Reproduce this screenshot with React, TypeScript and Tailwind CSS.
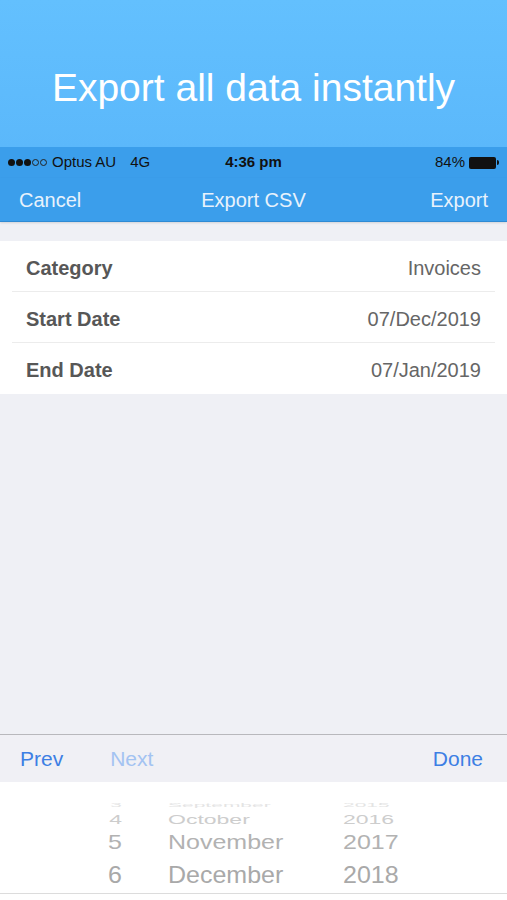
import React from "react";

const font = { fontFamily: '"Liberation Sans", Arial, sans-serif' };

type Row = { label: string; value: string };

const rows: Row[] = [
  { label: "Category", value: "Invoices" },
  { label: "Start Date", value: "07/Dec/2019" },
  { label: "End Date", value: "07/Jan/2019" },
];

function SignalDots() {
  return (
    <div className="flex items-center gap-[1px]">
      {[0, 1, 2].map((i) => (
        <span key={i} className="inline-block h-[7px] w-[7px] rounded-full bg-[#111]" />
      ))}
      {[0, 1].map((i) => (
        <span key={i} className="inline-block h-[7px] w-[7px] rounded-full border border-[#222]" />
      ))}
    </div>
  );
}

function Battery() {
  return (
    <div className="flex items-center">
      <div className="h-[12px] w-[27px] rounded-[2px] bg-[#111]" />
      <div className="ml-[1px] h-[5px] w-[2px] rounded-r-sm bg-[#111]" />
    </div>
  );
}

export default function App() {
  return (
    <div className="flex h-[900px] w-[507px] flex-col overflow-hidden bg-[#eff0f5]" style={font}>
      {/* promo header */}
      <div className="h-[147px] bg-gradient-to-b from-[#63c0fe] to-[#5bb8fb] pt-[65px] text-center">
        <h1 className="text-[39px] leading-[46px] text-white">Export all data instantly</h1>
      </div>

      {/* status bar */}
      <div className="flex h-[31px] items-center justify-between bg-[#3b9eeb] px-[8px] text-[15px] text-[#111]">
        <div className="flex w-[170px] items-center">
          <SignalDots />
          <span className="ml-[5px]">Optus AU</span>
          <span className="ml-[14px]">4G</span>
        </div>
        <span className="text-[15px] font-bold">4:36 pm</span>
        <div className="flex w-[170px] items-center justify-end gap-[4px]">
          <span>84%</span>
          <Battery />
        </div>
      </div>

      {/* nav bar */}
      <div className="grid h-[44px] grid-cols-3 items-center border-b border-[#2e8ad4] bg-[#3b9eeb] px-[19px] text-[20px] text-[#e8f2fc] shadow-[0_1px_2px_rgba(0,0,0,0.12)]">
        <span>Cancel</span>
        <span className="whitespace-nowrap text-center">Export CSV</span>
        <span className="text-right">Export</span>
      </div>

      <div className="h-[19px]" />

      {/* form rows */}
      <div className="bg-white px-[12px]">
        {rows.map((row, i) => (
          <div
            key={row.label}
            className={
              "flex h-[51px] items-center justify-between px-[14px] pt-[3px] " +
              (i < rows.length - 1 ? "border-b border-[#ececec]" : "")
            }
          >
            <span className="text-[20px] font-bold text-[#575757]">{row.label}</span>
            <span className="text-[20px] text-[#666]">{row.value}</span>
          </div>
        ))}
      </div>

      <div className="flex-1" />

      {/* keyboard toolbar */}
      <div className="flex h-[48px] items-center justify-between border-t border-[#b8b8bc] bg-[#f0f0f5] px-[20px] text-[21px]">
        <div className="flex items-center gap-[47px]">
          <span className="text-[#3d7fe4]">Prev</span>
          <span className="text-[#a3c3f2]">Next</span>
        </div>
        <span className="mr-[4px] text-[#3d7fe4]">Done</span>
      </div>

      {/* date picker */}
      <div className="flex h-[118px] flex-col bg-white">
        <div className="h-[17px]" />
        <PickerRow day="3" month="September" year="2015" h="h-[11px]" cls="scale-y-[0.28] text-[#e4e4e4] text-[21px]" />
        <PickerRow day="4" month="October" year="2016" h="h-[18px]" cls="scale-y-[0.55] text-[#cdcdcd] text-[23px]" />
        <PickerRow day="5" month="November" year="2017" h="h-[28px]" cls="scale-y-[0.8] text-[#b2b2b2] text-[25px]" />
        <PickerRow day="6" month="December" year="2018" h="h-[37px]" cls="scale-y-[0.95] text-[#a9a9a9] text-[25px]" />
        <div className="border-t border-[#dcdcdc]" />
      </div>
    </div>
  );
}

function PickerRow({ day, month, year, h, cls }: { day: string; month: string; year: string; h: string; cls: string }) {
  return (
    <div className={"flex items-center " + h}>
      <div className={"flex w-full items-center leading-none " + cls}>
        <span className="w-[122px] text-right">{day}</span>
        <span className="ml-[46px] w-[175px]">{month}</span>
        <span>{year}</span>
      </div>
    </div>
  );
}
